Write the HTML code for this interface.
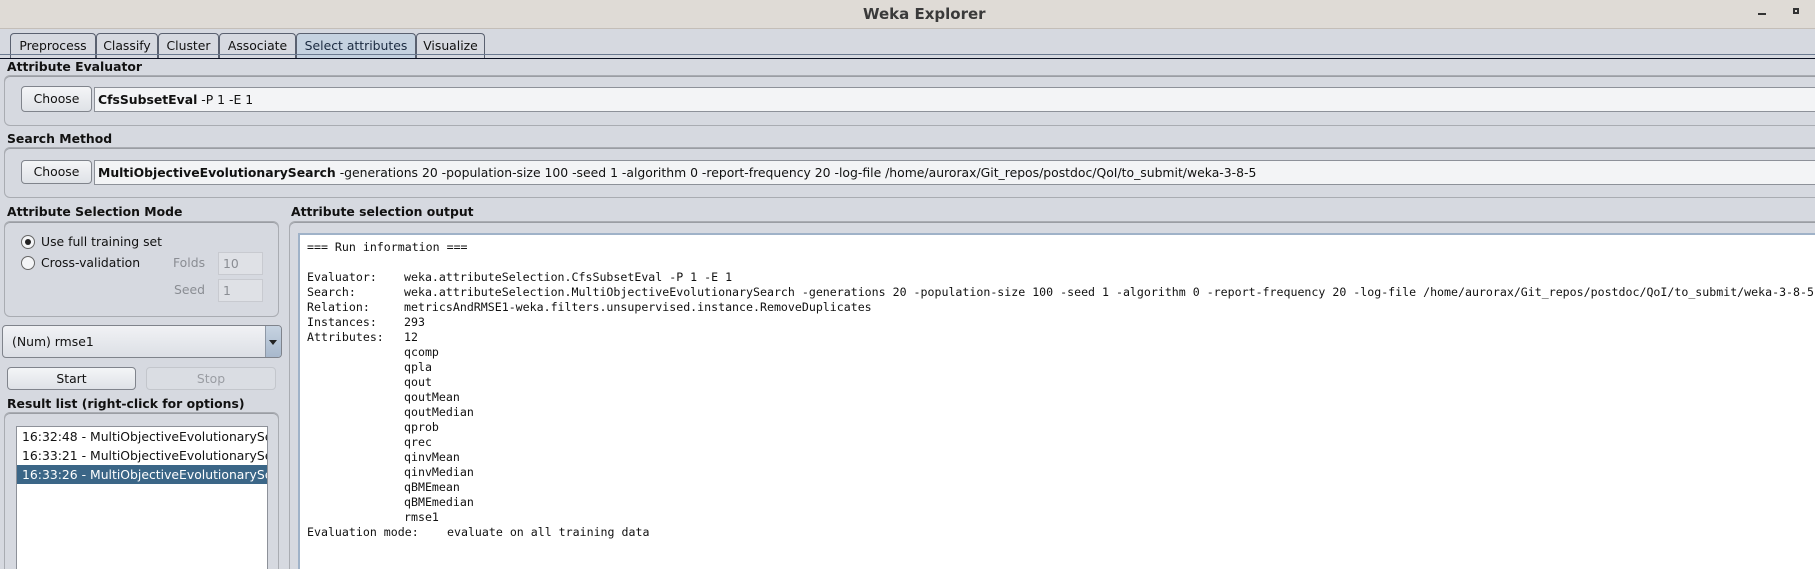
<!DOCTYPE html>
<html style="width:1815px;height:569px;overflow:hidden"><head><meta charset="utf-8"><style>
*{margin:0;padding:0;box-sizing:border-box}
body{width:1815px;height:569px;overflow:hidden;background:#d6d9e0;font-family:"DejaVu Sans","Liberation Sans",sans-serif;font-size:12.4px;color:#111;position:relative}
.a{position:absolute;white-space:nowrap}
.title{left:0;top:0;width:1815px;height:29px;background:#dfdbd6;border-bottom:1px solid #c4beb8}
.tab{position:absolute;top:33px;height:26px;border:1px solid #5a6170;border-bottom:none;border-radius:4px 4px 0 0;background:#d6d9e0;text-align:center;line-height:24px;font-size:12.4px}
.h{font-weight:bold;font-size:12.4px}
.grp{position:absolute;border:1px solid #a9acb2;border-radius:6px;box-shadow:inset 0 1px 0 #9a9da3}
.btn{position:absolute;border:1px solid #80848c;border-radius:4px;background:linear-gradient(#f4f5f7,#dfe2e7);text-align:center}
.fld{position:absolute;background:#f3f4f6;border:1px solid #8d9199;padding-left:3px;overflow:hidden}
.mono{font-family:"DejaVu Sans Mono","Liberation Mono",monospace;font-size:11.6px;color:#111}
</style></head><body>
<div class="a title"></div>
<div class="a" style="left:863px;top:5px;font-weight:bold;font-size:15px;color:#3a3a3a">Weka Explorer</div>
<div class="a" style="left:1758px;top:13px;width:8px;height:2px;background:#333"></div>
<div class="a" style="left:1793px;top:8px;width:6px;height:6px;border:2px solid #333"></div>

<div class="tab" style="left:10px;width:86px">Preprocess</div>
<div class="tab" style="left:96px;width:62px">Classify</div>
<div class="tab" style="left:158px;width:61px">Cluster</div>
<div class="tab" style="left:219px;width:77px">Associate</div>
<div class="tab" style="left:296px;width:120px;background:#c5d2e0;color:#1a2a40">Select attributes</div>
<div class="tab" style="left:416px;width:69px">Visualize</div>
<div class="a" style="left:0;top:54px;width:1815px;height:1px;background:#6b7a90"></div>
<div class="a" style="left:0;top:58px;width:1815px;height:1px;background:#0a0f20"></div>

<div class="a h" style="left:7px;top:59px">Attribute Evaluator</div>
<div class="grp" style="left:4px;top:75px;width:1830px;height:51px"></div>
<div class="btn" style="left:21px;top:86px;width:71px;height:26px;line-height:24px">Choose</div>
<div class="fld" style="left:94px;top:87px;width:1730px;height:25px;line-height:23px"><b>CfsSubsetEval</b> -P 1 -E 1</div>

<div class="a h" style="left:7px;top:131px">Search Method</div>
<div class="grp" style="left:4px;top:147px;width:1830px;height:51px"></div>
<div class="btn" style="left:21px;top:160px;width:71px;height:24px;line-height:22px">Choose</div>
<div class="fld" style="left:94px;top:160px;width:1730px;height:25px;line-height:23px"><b>MultiObjectiveEvolutionarySearch</b> -generations 20 -population-size 100 -seed 1 -algorithm 0 -report-frequency 20 -log-file /home/aurorax/Git_repos/postdoc/QoI/to_submit/weka-3-8-5</div>

<div class="a h" style="left:7px;top:204px">Attribute Selection Mode</div>
<div class="grp" style="left:4px;top:221px;width:275px;height:96px"></div>
<div class="a" style="left:21px;top:235px;width:14px;height:14px;border:1px solid #666;border-radius:50%;background:#f4f5f7"></div>
<div class="a" style="left:25px;top:239px;width:6px;height:6px;border-radius:50%;background:#222"></div>
<div class="a" style="left:41px;top:234px">Use full training set</div>
<div class="a" style="left:21px;top:256px;width:14px;height:14px;border:1px solid #666;border-radius:50%;background:#f4f5f7"></div>
<div class="a" style="left:41px;top:255px">Cross-validation</div>
<div class="a" style="left:173px;top:255px;color:#8a8d93">Folds</div>
<div class="a" style="left:218px;top:252px;width:45px;height:23px;background:#dfe1e6;border:1px solid #c8cad0;color:#8a8d93;padding:3px 0 0 4px">10</div>
<div class="a" style="left:174px;top:282px;color:#8a8d93">Seed</div>
<div class="a" style="left:218px;top:279px;width:45px;height:23px;background:#dfe1e6;border:1px solid #c8cad0;color:#8a8d93;padding:3px 0 0 4px">1</div>

<div class="a" style="left:2px;top:325px;width:280px;height:33px;border:1px solid #7f838b;border-radius:4px;background:linear-gradient(#f1f2f5,#dcdfe5)"></div>
<div class="a" style="left:12px;top:334px">(Num) rmse1</div>
<div class="a" style="left:265px;top:326px;width:16px;height:31px;background:linear-gradient(#c7d3e1,#a8b8cc);border-left:1px solid #8e98a6;border-radius:0 3px 3px 0"></div>
<div class="a" style="left:269px;top:340px;width:0;height:0;border-left:4px solid transparent;border-right:4px solid transparent;border-top:5px solid #222"></div>

<div class="btn" style="left:7px;top:367px;width:129px;height:23px;line-height:21px">Start</div>
<div class="btn" style="left:146px;top:367px;width:130px;height:23px;line-height:21px;background:#dadde3;border-color:#c3c6cc;color:#9a9da3">Stop</div>

<div class="a h" style="left:7px;top:396px">Result list (right-click for options)</div>
<div class="grp" style="left:4px;top:412px;width:275px;height:170px"></div>
<div class="a" style="left:16px;top:426px;width:252px;height:150px;background:#fff;border:1px solid #8d9199;overflow:hidden">
<div style="position:absolute;left:5px;top:2px;white-space:nowrap">16:32:48 - MultiObjectiveEvolutionarySearch</div>
<div style="position:absolute;left:5px;top:21px;white-space:nowrap">16:33:21 - MultiObjectiveEvolutionarySearch</div>
<div style="position:absolute;left:0;top:38px;width:260px;height:19px;background:#3b6687"></div>
<div style="position:absolute;left:5px;top:40px;white-space:nowrap;color:#fff">16:33:26 - MultiObjectiveEvolutionarySearch</div>
</div>

<div class="a h" style="left:291px;top:204px">Attribute selection output</div>
<div class="grp" style="left:289px;top:221px;width:1540px;height:360px"></div>
<div class="a" style="left:298px;top:233px;width:1530px;height:340px;background:#fff;border:2px solid #9fb2c8;border-right:none;border-bottom:none"></div>
<div class="a mono" style="left:307px;top:240px;line-height:15px">=== Run information ===</div>
<div class="a mono" style="left:307px;top:270px;line-height:15px">Evaluator:<br>Search:<br>Relation:<br>Instances:<br>Attributes:<br><br><br><br><br><br><br><br><br><br><br><br><br>Evaluation mode:</div>
<div class="a mono" style="left:404px;top:270px;line-height:15px">weka.attributeSelection.CfsSubsetEval -P 1 -E 1<br>weka.attributeSelection.MultiObjectiveEvolutionarySearch -generations 20 -population-size 100 -seed 1 -algorithm 0 -report-frequency 20 -log-file /home/aurorax/Git_repos/postdoc/QoI/to_submit/weka-3-8-5<br>metricsAndRMSE1-weka.filters.unsupervised.instance.RemoveDuplicates<br>293<br>12<br>qcomp<br>qpla<br>qout<br>qoutMean<br>qoutMedian<br>qprob<br>qrec<br>qinvMean<br>qinvMedian<br>qBMEmean<br>qBMEmedian<br>rmse1</div>
<div class="a mono" style="left:447px;top:525px;line-height:15px">evaluate on all training data</div>
</body></html>
